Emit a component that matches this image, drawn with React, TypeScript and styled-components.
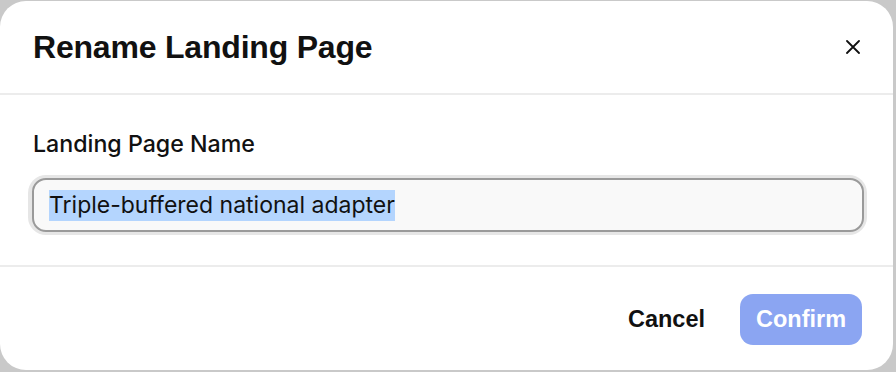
import React from "react";
import styled, { createGlobalStyle } from "styled-components";

const Global = createGlobalStyle`
  html, body { margin: 0; padding: 0; }
  body {
    background: #c9c9c9;
    font-family: Inter, "Liberation Sans", Arial, sans-serif;
    -webkit-font-smoothing: antialiased;
  }
`;

const Page = styled.div`
  width: 896px;
  height: 372px;
  display: flex;
  align-items: flex-start;
  padding: 1px 3px 1px 0;
  box-sizing: border-box;
`;

const Modal = styled.div`
  flex: 1;
  height: 369px;
  background: #ffffff;
  border-radius: 26px;
  display: flex;
  flex-direction: column;
  overflow: hidden;
`;

const Header = styled.div`
  height: 92px;
  display: flex;
  align-items: center;
  justify-content: space-between;
  padding: 0 30px 0 33px;
  border-bottom: 2px solid #ececec;
`;

const Title = styled.h2`
  margin: 0;
  font-family: "Liberation Sans", Arial, sans-serif;
  font-size: 32px;
  font-weight: 700;
  color: #111111;
  letter-spacing: -0.2px;
`;

const CloseButton = styled.button`
  border: none;
  background: none;
  padding: 0;
  width: 20px;
  height: 20px;
  display: flex;
  align-items: center;
  justify-content: center;
  cursor: pointer;
`;

const Body = styled.div`
  height: 172px;
  padding: 35px 26px 0 28px;
  box-sizing: border-box;
  border-bottom: 2px solid #ececec;
  display: flex;
  flex-direction: column;
  gap: 17px;
`;

const Label = styled.label`
  padding-left: 5px;
  font-size: 23.2px;
  font-weight: 500;
  color: #111111;
  line-height: 28px;
`;

const InputRing = styled.div`
  border-radius: 18px;
  background: #e6e6e6;
  padding: 3px 3px 3px 4px;
`;

const Input = styled.div`
  height: 50px;
  border: 2px solid #9a9a9a;
  border-radius: 14px;
  background: #f9f9f9;
  display: flex;
  align-items: center;
  padding: 0 15px;
  font-size: 23px;
  color: #111111;
`;

const Selected = styled.span`
  background: #b4d5fe;
  line-height: 31px;
`;

const Footer = styled.div`
  flex: 1;
  display: flex;
  align-items: center;
  justify-content: flex-end;
  gap: 35px;
  padding: 2px 31px 0 0;
`;

const TextButton = styled.button`
  border: none;
  background: none;
  padding: 0;
  font-family: "Liberation Sans", Arial, sans-serif;
  font-size: 23.5px;
  font-weight: 700;
  color: #111111;
  cursor: pointer;
`;

const PrimaryButton = styled.button`
  border: none;
  background: #8ba5f2;
  color: #ffffff;
  height: 51px;
  width: 122px;
  border-radius: 13px;
  font-family: "Liberation Sans", Arial, sans-serif;
  font-size: 23.5px;
  font-weight: 700;
  cursor: pointer;
`;

export default function App() {
  return (
    <>
      <Global />
      <Page>
        <Modal>
          <Header>
            <Title>Rename Landing Page</Title>
            <CloseButton aria-label="Close">
              <svg width="14" height="14" viewBox="0 0 14 14">
                <path d="M1 1L13 13M13 1L1 13" stroke="#111" strokeWidth="1.8" strokeLinecap="round" />
              </svg>
            </CloseButton>
          </Header>
          <Body>
            <Label>Landing Page Name</Label>
            <InputRing>
              <Input>
                <Selected>Triple-buffered national adapter</Selected>
              </Input>
            </InputRing>
          </Body>
          <Footer>
            <TextButton>Cancel</TextButton>
            <PrimaryButton>Confirm</PrimaryButton>
          </Footer>
        </Modal>
      </Page>
    </>
  );
}
